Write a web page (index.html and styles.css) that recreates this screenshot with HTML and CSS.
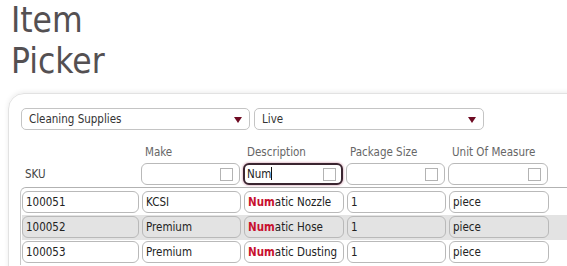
FILE: index.html
```html
<!DOCTYPE html>
<html lang="en">
<head>
    <meta charset="UTF-8">
    <title>Item Picker</title>
    <link rel="stylesheet" href="styles.css">
</head>
<body>

    <h1 class="page-title">Item<br>Picker</h1>

    <div class="picker-panel">
        <!-- category / status dropdowns -->
        <div class="select-row">
            <div class="fake-select wide-a">Cleaning Supplies<span class="arrow"></span></div>
            <div class="fake-select wide-b">Live<span class="arrow"></span></div>
        </div>

        <!-- column headers and filters -->
        <div class="grid-row header-labels">
            <div></div>
            <div class="col-label">Make</div>
            <div class="col-label">Description</div>
            <div class="col-label">Package Size</div>
            <div class="col-label">Unit Of Measure</div>
        </div>
        <div class="grid-row filter-row">
            <div class="sku-label">SKU</div>
            <div class="filter-box"><span class="check"></span></div>
            <div class="filter-box focused"><span class="typed">Num</span><span class="caret"></span><span class="check"></span></div>
            <div class="filter-box"><span class="check"></span></div>
            <div class="filter-box"><span class="check"></span></div>
        </div>

        <!-- results -->
        <div class="results">
            <div class="grid-row item-row">
                <div class="cell">100051</div>
                <div class="cell">KCSI</div>
                <div class="cell"><b class="hit">Num</b>atic Nozzle</div>
                <div class="cell">1</div>
                <div class="cell">piece</div>
            </div>
            <div class="grid-row item-row alt">
                <div class="cell">100052</div>
                <div class="cell">Premium</div>
                <div class="cell"><b class="hit">Num</b>atic Hose</div>
                <div class="cell">1</div>
                <div class="cell">piece</div>
            </div>
            <div class="grid-row item-row">
                <div class="cell">100053</div>
                <div class="cell">Premium</div>
                <div class="cell"><b class="hit">Num</b>atic Dusting</div>
                <div class="cell">1</div>
                <div class="cell">piece</div>
            </div>
        </div>
    </div>

</body>
</html>
```

FILE: styles.css
```css
body {
    font-family: "DejaVu Sans Condensed", "DejaVu Sans", sans-serif;
    background-color: #fff;
    color: #333;
    margin: 0;
    padding: 0 0 0 8px;
    overflow: hidden;
}

.page-title {
    font-family: "DejaVu Sans Condensed", "DejaVu Sans", sans-serif;
    font-weight: normal;
    font-size: 35px;
    line-height: 41px;
    color: #545052;
    margin: 0;
    padding: 0 0 0 3px;
}

.picker-panel {
    margin-top: 11px;
    width: 640px;
    height: 200px;
    border: 1px solid #e2e2e2;
    border-radius: 16px;
    box-shadow: 0 -1px 5px rgba(0, 0, 0, 0.08);
    padding: 14px 0 0 12px;
    box-sizing: border-box;
}

.select-row {
    display: flex;
    gap: 4px;
}

.fake-select {
    position: relative;
    height: 22px;
    box-sizing: border-box;
    border: 1px solid #c4c4c4;
    border-radius: 5px;
    font-size: 11.5px;
    line-height: 20px;
    padding-left: 7px;
    color: #333;
}

.wide-a {
    width: 229px;
}

.wide-b {
    width: 230px;
}

.fake-select .arrow {
    position: absolute;
    right: 7px;
    top: 8px;
    border-left: 4px solid transparent;
    border-right: 4px solid transparent;
    border-top: 6px solid #6e0b23;
}

.grid-row {
    display: grid;
    grid-template-columns: 117px 99px 100px 99px 100px;
    column-gap: 3px;
    margin-left: 0;
}

.header-labels {
    margin-top: 12px;
    height: 21px;
    font-size: 11.5px;
    color: #666;
    line-height: 21px;
}

.col-label {
    padding-left: 4px;
}

.filter-row {
    height: 22px;
}

.sku-label {
    font-size: 11.5px;
    color: #444;
    line-height: 22px;
    padding-left: 4px;
}

.filter-box {
    position: relative;
    box-sizing: border-box;
    height: 22px;
    border: 1px solid #b9b9b9;
    border-radius: 6px;
    background: #fff;
    font-size: 11.5px;
    line-height: 20px;
    padding-left: 3px;
    color: #222;
}

.filter-box.focused {
    border: 2px solid #3a2530;
    box-shadow: 0 0 2px 1px #e6c8d2;
    line-height: 18px;
    padding-left: 2px;
}

.filter-box .check {
    position: absolute;
    right: 6px;
    top: 4px;
    width: 11px;
    height: 11px;
    border: 1px solid #b3b3b3;
    background: #fff;
}

.filter-box.focused .check {
    right: 5px;
    top: 3px;
}

.caret {
    display: inline-block;
    width: 1px;
    height: 13px;
    background: #111;
    vertical-align: -2px;
}

.results {
    margin-top: 2px;
    margin-left: -1px;
    border-top: 1px solid #b2b2b2;
    border-left: 1px solid #c8c8c8;
    border-top-left-radius: 6px;
    padding: 2px 0 0 1px;
}

.item-row {
    padding: 1px 0 2px 0;
}

.item-row.alt {
    background-color: #e3e3e3;
}

.cell {
    box-sizing: border-box;
    height: 22px;
    border: 1px solid #b9b9b9;
    border-radius: 6px;
    background: #fff;
    font-size: 11.5px;
    line-height: 20px;
    padding-left: 3px;
    color: #222;
    white-space: nowrap;
    overflow: hidden;
}

.alt .cell {
    background-color: #e3e3e3;
}

.hit {
    color: #c8102e;
}
```
